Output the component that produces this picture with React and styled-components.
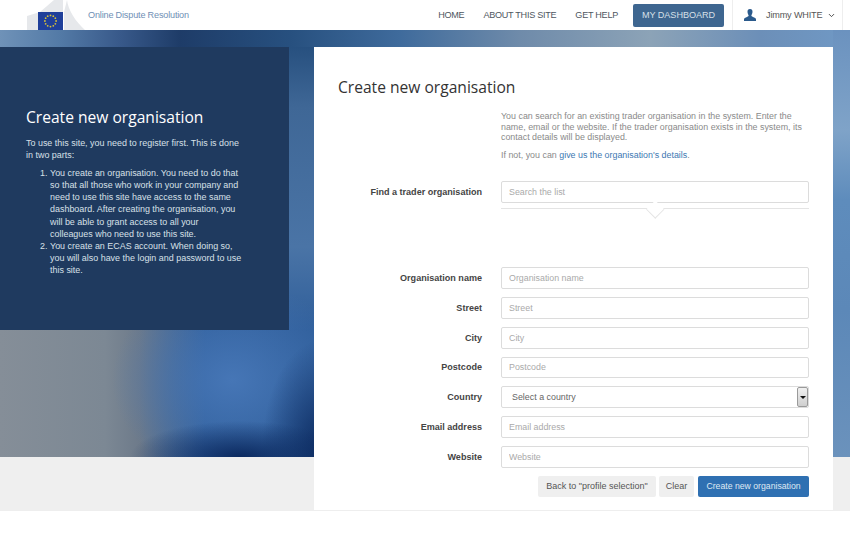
import React from 'react'
import styled, { createGlobalStyle } from 'styled-components'
import { ChevronDown } from 'lucide-react'

const GlobalStyle = createGlobalStyle`
  html, body {
    margin: 0;
    padding: 0;
    background: #fff;
    font-family: "Liberation Sans", Arial, sans-serif;
    overflow: hidden;
  }
  * { box-sizing: border-box; }
`

const Page = styled.div`
  width: 850px;
  height: 539px;
  display: flex;
  flex-direction: column;
`

const Header = styled.header`
  height: 30px;
  flex: none;
  display: flex;
  align-items: center;
  background: #fff;
  padding-left: 26px;
`

const Brand = styled.div`
  display: flex;
  align-items: center;
  height: 30px;
  flex: 1;
`

const BrandName = styled.span`
  margin-left: 2px;
  font-size: 9.1px;
  letter-spacing: -0.17px;
  color: #6f8fb5;
`

const Nav = styled.nav`
  display: flex;
  align-items: center;
  height: 30px;
`

const NavLink = styled.a`
  font-size: 9.1px;
  letter-spacing: -0.27px;
  color: #4d5660;
  margin-right: 19px;
`

const DashboardButton = styled.a`
  width: 91px;
  height: 23px;
  margin: 0 8px 0 -4px;
  display: flex;
  align-items: center;
  justify-content: center;
  background: #3e6690;
  border-radius: 2px;
  font-size: 9.1px;
  letter-spacing: -0.05px;
  color: #d8e0e8;
`

const UserMenu = styled.div`
  width: 111px;
  height: 30px;
  margin-right: 7px;
  display: flex;
  align-items: center;
  padding-left: 10px;
  border-left: 1px solid #eee;
  border-right: 1px solid #eee;
  font-size: 9.1px;
  letter-spacing: -0.15px;
  color: #555;
`

const UserName = styled.span`
  margin: 0 5px 0 9px;
`

const Stage = styled.main`
  flex: none;
  display: flex;
  align-items: flex-start;
  gap: 25px;
  padding-top: 17px;
  height: 481px;
  border-bottom: 1px solid #eee;
  background-color: #efefef;
  background-repeat: no-repeat;
  background-image:
    radial-gradient(110px 36px at 240px 427px, #0c2a60 0%, rgba(12, 42, 96, 0.55) 45%, rgba(12, 42, 96, 0) 100%),
    radial-gradient(60px 110px at 322px 420px, #0d2c62 0%, rgba(13, 44, 98, 0) 100%),
    radial-gradient(120px 100px at 232px 350px, #4676b6 0%, rgba(70, 118, 182, 0) 100%),
    linear-gradient(90deg, #858e98 0, #7c8894 105px, #6d7a8a 140px, rgba(80, 110, 150, 0) 205px),
    linear-gradient(90deg, #2e5c98, #2f5e9a),
    linear-gradient(180deg, #27507f 0, #3f6796 60px, #4a74a6 200px, #2f5e9a 100%),
    linear-gradient(180deg, #6b92bf 0, #7fa3c8 100px, #5e8cbc 170px, #5c88b8 280px, #6b92bc 427px),
    linear-gradient(90deg, #6f92b8 0, #537aa6 60px, #38598a 120px, #1e3c68 180px, #27507f 290px, #3f6b9c 400px, #6f8baa 520px, #8ca3b7 650px, #6c8fb8 760px, #7099c5 850px);
  background-size:
    100% 427px,
    100% 427px,
    100% 427px,
    100% 127px,
    314px 127px,
    25px 283px,
    17px 427px,
    100% 20px;
  background-position:
    0 0,
    0 0,
    0 0,
    0 300px,
    0 300px,
    289px 17px,
    833px 0,
    0 0;
`

const InfoPanel = styled.aside`
  width: 289px;
  height: 283px;
  flex: none;
  padding: 60px 46px 0 26px;
  background: #1f3a5f;
  color: #d8e0e8;
  font-size: 8.95px;
  line-height: 12.1px;
`

const InfoTitle = styled.h2`
  margin: 0 0 10px;
  font-family: "Open Sans", sans-serif;
  font-weight: 400;
  font-size: 15.6px;
  line-height: 20px;
  color: #fff;
`

const InfoText = styled.p`
  margin: 0 0 6px;
`

const Steps = styled.ol`
  margin: 0;
  padding-left: 24px;
`

const Card = styled.section`
  width: 519px;
  height: 463px;
  flex: none;
  padding: 30px 24px 0;
  background: #fff;
`

const Title = styled.h1`
  margin: 0 0 14px;
  font-family: "Open Sans", sans-serif;
  font-weight: 400;
  font-size: 15.6px;
  line-height: 20px;
  color: #333;
`

const Intro = styled.div`
  margin-left: 163px;
  font-size: 8.9px;
  line-height: 10.7px;
  color: #8a8a8a;
`

const IntroText = styled.p`
  margin: 0 0 7px;
`

const IntroLink = styled.a`
  color: #3d78b2;
`

const Row = styled.div`
  display: grid;
  grid-template-columns: 144px 308px;
  column-gap: 19px;
  align-items: center;
  height: 21.8px;
  margin-bottom: 8px;
`

const SearchRow = styled(Row)`
  margin-top: 20px;
`

const Label = styled.label`
  text-align: right;
  font-size: 9.05px;
  font-weight: 700;
  color: #444;
`

const Input = styled.input`
  width: 100%;
  height: 21.8px;
  padding: 0 7px;
  border: 1px solid #dcdcdc;
  border-radius: 2px;
  background: #fff;
  font-family: inherit;
  font-size: 8.85px;
  color: #555;
  outline: none;

  &::placeholder {
    color: #aaa;
    opacity: 1;
  }
`

const SelectWrap = styled.div`
  position: relative;
  height: 21.8px;
`

const Select = styled.select`
  appearance: none;
  width: 100%;
  height: 100%;
  padding: 0 10px;
  border: 1px solid #dcdcdc;
  border-radius: 2px;
  background: #fff;
  font-family: inherit;
  font-size: 8.9px;
  color: #666;
  outline: none;
`

const SelectArrow = styled.span`
  position: absolute;
  top: 1px;
  right: 1px;
  width: 11px;
  height: 20px;
  display: flex;
  align-items: center;
  justify-content: center;
  border: 1px solid #9a9a9a;
  border-radius: 2px;
  background: linear-gradient(180deg, #f0f0f0, #cfcfcf);

  &::after {
    content: '';
    border-left: 3px solid transparent;
    border-right: 3px solid transparent;
    border-top: 3px solid #111;
  }
`

const Notch = styled.div`
  position: relative;
  height: 1.5px;
  margin: -3px 0 0 163px;
  width: 308px;
  background: #e4e4e4;

  &::after {
    content: '';
    position: absolute;
    left: 148px;
    top: -5px;
    width: 11.5px;
    height: 11.5px;
    background: #fff;
    border-right: 1px solid #e4e4e4;
    border-bottom: 1px solid #e4e4e4;
    transform: rotate(45deg);
  }
`

const Fields = styled.div`
  margin-top: 58px;
`

const Actions = styled.div`
  display: flex;
  justify-content: flex-end;
  gap: 3px;
  margin-top: 0.5px;
`

const Button = styled.button`
  height: 21px;
  padding: 0;
  width: ${p => p.$width}px;
  margin-left: ${p => (p.$primary ? 1 : 0)}px;
  border: none;
  border-radius: 2px;
  background: ${p => (p.$primary ? '#2f70b2' : '#efefef')};
  color: ${p => (p.$primary ? '#dfe9f3' : '#555')};
  font-family: inherit;
  font-size: ${p => (p.$primary ? 8.7 : 9)}px;
`

const starPoints = Array.from({ length: 12 }, (_, i) => {
  const a = (i * Math.PI) / 6
  return { x: 12.5 + Math.sin(a) * 5.6, y: 9 + Math.cos(a) * 5.6 }
})

const Logo = () => (
  <svg width="60" height="30" viewBox="0 0 60 30">
    <path d="M1 16 L14 12 L28 0 L37 0 L37 30 L1 30 Z" fill="#e6e8eb" />
    <path d="M41 0 C42 10 50 22 59 30 L38 30 L38 12 Z" fill="#e6e8eb" />
    <rect x="12" y="12" width="25" height="18" fill="#1f3f9a" />
    {starPoints.map((s, i) => (
      <circle key={i} cx={s.x + 12} cy={s.y + 12} r="0.9" fill="#d8c13a" />
    ))}
  </svg>
)

const UserIcon = () => (
  <svg width="14" height="14" viewBox="0 0 14 14">
    <path
      d="M7 1 C5.2 1 4.4 2.3 4.5 4 C4.6 5.6 5.3 6.6 5.6 7.3 C5.7 8 5.2 8.5 4 9 C2.4 9.6 1 10.2 1 11.4 L1 13 L13 13 L13 11.4 C13 10.2 11.6 9.6 10 9 C8.8 8.5 8.3 8 8.4 7.3 C8.7 6.6 9.4 5.6 9.5 4 C9.6 2.3 8.8 1 7 1 Z"
      fill="#2b5a8c"
    />
  </svg>
)

const fields = [
  'Organisation name',
  'Street',
  'City',
  'Postcode',
]

export default function App() {
  return (
    <Page>
      <GlobalStyle />
      <Header>
        <Brand>
          <Logo />
          <BrandName>Online Dispute Resolution</BrandName>
        </Brand>
        <Nav>
          <NavLink>HOME</NavLink>
          <NavLink>ABOUT THIS SITE</NavLink>
          <NavLink>GET HELP</NavLink>
          <DashboardButton>MY DASHBOARD</DashboardButton>
          <UserMenu>
            <UserIcon />
            <UserName>Jimmy WHITE</UserName>
            <ChevronDown size={9} strokeWidth={2.5} color="#444" />
          </UserMenu>
        </Nav>
      </Header>
      <Stage>
        <InfoPanel>
          <InfoTitle>Create new organisation</InfoTitle>
          <InfoText>To use this site, you need to register first. This is done in two parts:</InfoText>
          <Steps>
            <li>You create an organisation. You need to do that so that all those who work in your company and need to use this site have access to the same dashboard. After creating the organisation, you will be able to grant access to all your colleagues who need to use this site.</li>
            <li>You create an ECAS account. When doing so, you will also have the login and password to use this site.</li>
          </Steps>
        </InfoPanel>
        <Card>
          <Title>Create new organisation</Title>
          <Intro>
            <IntroText>You can search for an existing trader organisation in the system. Enter the name, email or the website. If the trader organisation exists in the system, its contact details will be displayed.</IntroText>
            <IntroText>If not, you can <IntroLink>give us the organisation's details</IntroLink>.</IntroText>
          </Intro>
          <SearchRow>
            <Label>Find a trader organisation</Label>
            <Input placeholder="Search the list" />
          </SearchRow>
          <Notch />
          <Fields>
            {fields.map(name => (
              <Row key={name}>
                <Label>{name}</Label>
                <Input placeholder={name} />
              </Row>
            ))}
            <Row>
              <Label>Country</Label>
              <SelectWrap>
                <Select defaultValue="">
                  <option value="">Select a country</option>
                </Select>
                <SelectArrow />
              </SelectWrap>
            </Row>
            <Row>
              <Label>Email address</Label>
              <Input placeholder="Email address" />
            </Row>
            <Row>
              <Label>Website</Label>
              <Input placeholder="Website" />
            </Row>
          </Fields>
          <Actions>
            <Button $width={118}>Back to "profile selection"</Button>
            <Button $width={35}>Clear</Button>
            <Button $width={111} $primary>Create new organisation</Button>
          </Actions>
        </Card>
      </Stage>
    </Page>
  )
}
